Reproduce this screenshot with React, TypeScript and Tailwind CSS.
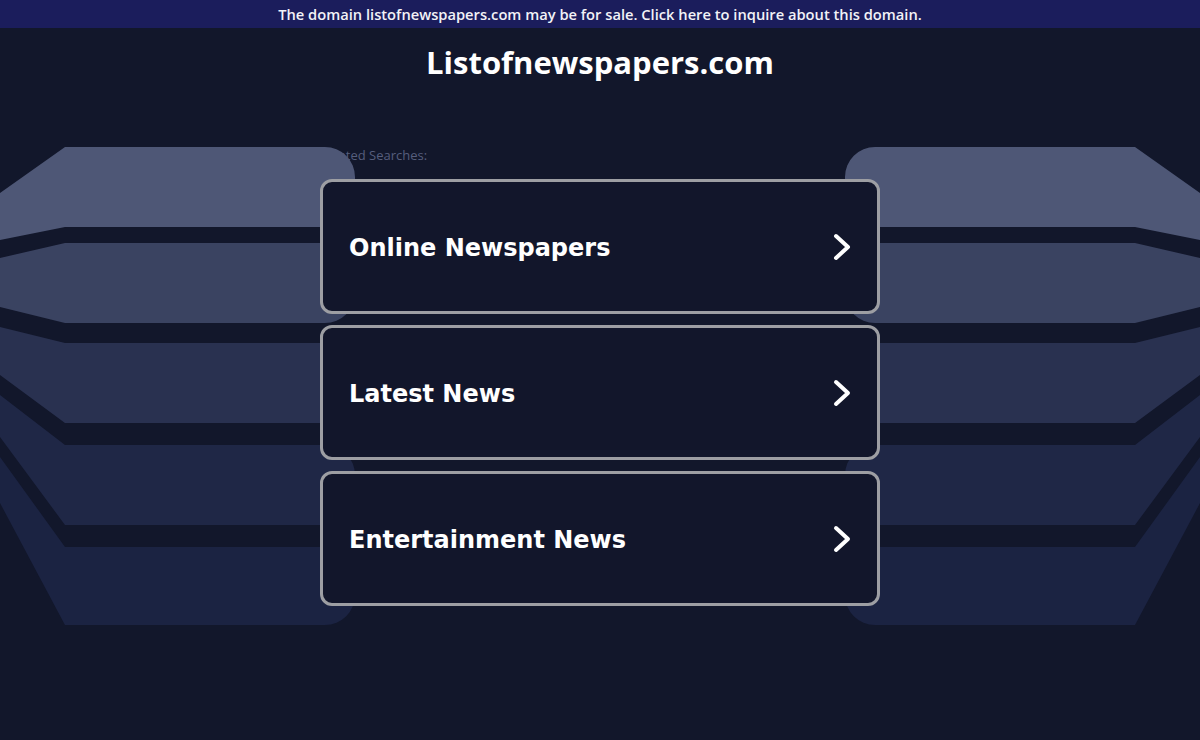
import React from 'react';

const BANDS = [
  { top: 147, bottom: 227, edgeTop: 193, edgeBottom: 240, fill: '#4e5776' },
  { top: 243, bottom: 323, edgeTop: 258, edgeBottom: 307, fill: '#3a4361' },
  { top: 343, bottom: 423, edgeTop: 327, edgeBottom: 375, fill: '#293150' },
  { top: 445, bottom: 525, edgeTop: 395, edgeBottom: 437, fill: '#1f2746' },
  { top: 547, bottom: 625, edgeTop: 457, edgeBottom: 503, fill: '#1b2342' },
];

const SEARCHES = ['Online Newspapers', 'Latest News', 'Entertainment News'];

function bandPath(b: (typeof BANDS)[number]) {
  const r = 30;
  return `M0,${b.edgeTop} L65,${b.top} L${355 - r},${b.top} A${r},${r} 0 0 1 355,${b.top + r} L355,${b.bottom - r} A${r},${r} 0 0 1 ${355 - r},${b.bottom} L65,${b.bottom} L0,${b.edgeBottom} Z`;
}

function Backdrop() {
  const side = BANDS.map((b, i) => <path key={i} d={bandPath(b)} fill={b.fill} />);
  return (
    <svg
      className="pointer-events-none absolute left-1/2 top-0 -translate-x-1/2"
      width={1200}
      height={740}
      viewBox="0 0 1200 740"
    >
      <g>{side}</g>
      <g transform="translate(1200,0) scale(-1,1)">{side}</g>
    </svg>
  );
}

function Chevron() {
  return (
    <svg width="22" height="28" viewBox="0 0 22 28" className="shrink-0">
      <polyline
        points="5,3 17,14 5,25"
        fill="none"
        stroke="#ffffff"
        strokeWidth="4"
        strokeLinecap="round"
        strokeLinejoin="round"
      />
    </svg>
  );
}

export default function App() {
  return (
    <div className="relative min-h-[740px] w-full overflow-hidden bg-[#12172b] font-['Open_Sans',sans-serif] text-white">
      <div className="flex h-[28px] items-center justify-center bg-[#1b1d5c] text-[14.7px] font-semibold text-[#f2f2f7]">
        The domain listofnewspapers.com may be for sale. Click here to inquire about this domain.
      </div>

      <h1 className="mt-[14px] h-[40px] text-center text-[31px] font-bold leading-[40px]">
        Listofnewspapers.com
      </h1>

      <div className="mx-auto mt-[65px] w-[560px] text-[13px] leading-[16px] text-[#565e7d]">
        Related Searches:
      </div>

      <Backdrop />

      <div className="relative z-10 mx-auto mt-[16px] flex w-[560px] flex-col gap-[11px]">
        {SEARCHES.map((label) => (
          <a
            key={label}
            href="#"
            className="flex h-[135px] items-center justify-between rounded-[12px] border-[3px] border-[#9d9ea3] bg-[#12162b] pl-[26px] pr-[24px] font-['DejaVu_Sans',sans-serif] text-[24px] font-bold text-white"
          >
            <span className="translate-y-[1px]">{label}</span>
            <Chevron />
          </a>
        ))}
      </div>
    </div>
  );
}
